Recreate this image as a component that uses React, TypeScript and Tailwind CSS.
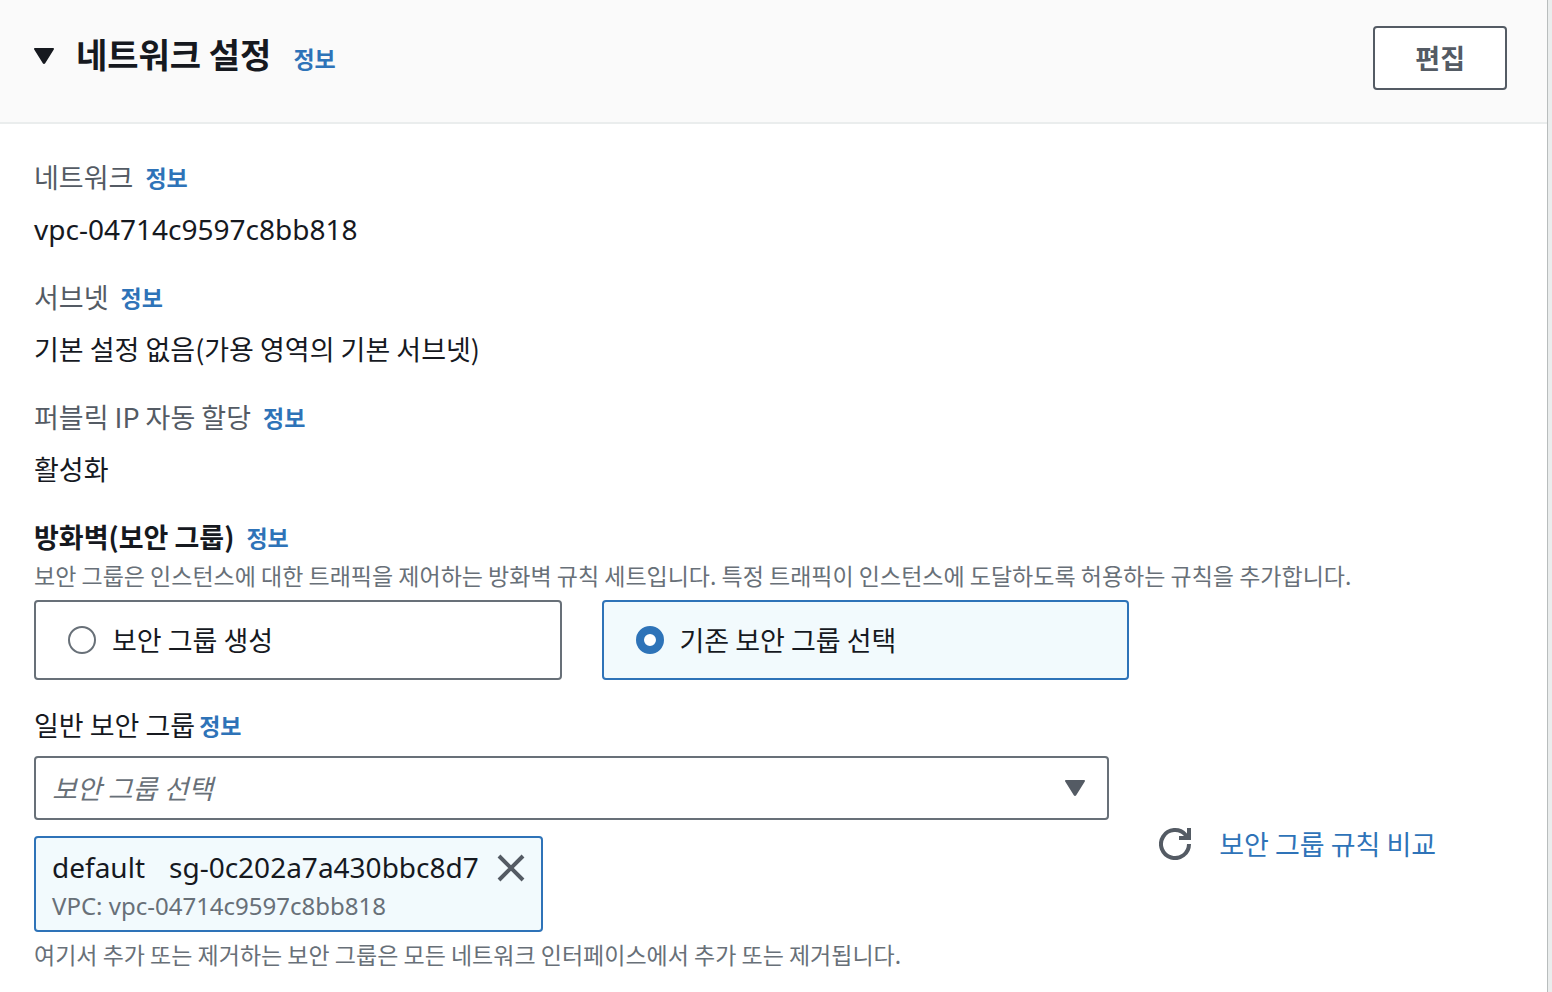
import React, { FC, ReactNode, useState } from 'react';

const Info: FC = () => (
  <a href="#info" className="text-[23px] font-bold text-[#2e73b8] hover:underline">
    정보
  </a>
);

const Caret: FC<{ className: string }> = ({ className }) => (
  <svg viewBox="0 0 20 16" className={`h-4 w-5 ${className}`} fill="currentColor" aria-hidden="true">
    <path d="M1 0h18c.8 0 1.2.8.8 1.600L11.200 15.200c-.5 1-1.900 1-2.400 0L.2 1.600C-.2.8.2 0 1 0z" />
  </svg>
);

type FieldProps = {
  label: string;
  children: ReactNode;
};

const Field: FC<FieldProps> = ({ label, children }) => (
  <div className="flex flex-col gap-3">
    <dt className="flex h-10 items-center gap-3 text-[27px] leading-9 text-[#545b64]">
      {label}
      <Info />
    </dt>
    <dd className="flex h-10 items-center text-[27px] leading-9">{children}</dd>
  </div>
);

const options = [
  { id: 'create', label: '보안 그룹 생성' },
  { id: 'existing', label: '기존 보안 그룹 선택' },
];

const App: FC = () => {
  const [mode, setMode] = useState('existing');
  const [open, setOpen] = useState(true);
  const [attached, setAttached] = useState(true);

  return (
    <div className="min-h-screen bg-[#eaeded] pr-1 font-['Noto_Sans_CJK_KR','Noto_Sans',sans-serif] text-[#16191f]">
      <section className="min-h-screen border-r border-[#b9bdbd] bg-white">
        <header className="flex items-start justify-between border-b-2 border-[#eaeded] bg-[#fafafa] pt-[26px] pr-10 pb-8 pl-[34px]">
          <div className="flex items-baseline gap-[22px]">
            <h2 className="text-[34px] leading-[56px] font-bold">
              <button type="button" aria-expanded={open} onClick={() => setOpen(!open)}>
                <Caret className={`mr-[22px] inline-block align-[4px] ${open ? '' : '-rotate-90'}`} />
                네트워크 설정
              </button>
            </h2>
            <Info />
          </div>
          <button
            type="button"
            className="h-16 rounded-sm border-2 border-[#545b64] bg-white px-10 text-[27px] leading-9 font-bold text-[#545b64]"
          >
            편집
          </button>
        </header>

        {open && (
          <div className="pt-[33px] pr-10 pb-1 pl-[34px]">
            <dl className="flex flex-col gap-7">
              <Field label="네트워크">
                <span className="font-['Noto_Sans',sans-serif] text-[28px]">vpc-04714c9597c8bb818</span>
              </Field>
              <Field label="서브넷">기본 설정 없음(가용 영역의 기본 서브넷)</Field>
              <Field label="퍼블릭 IP 자동 할당">활성화</Field>
            </dl>

            <fieldset className="mt-7">
              <legend className="flex h-10 items-center gap-3 text-[27px] leading-9 font-bold">
                방화벽(보안 그룹)
                <Info />
              </legend>
              <p className="text-[23px] leading-9 text-[#687078]">
                보안 그룹은 인스턴스에 대한 트래픽을 제어하는 방화벽 규칙 세트입니다. 특정 트래픽이 인스턴스에 도달하도록 허용하는 규칙을 추가합니다.
              </p>
              <div className="mt-[7px] grid max-w-[1095px] grid-cols-2 gap-10">
                {options.map(({ id, label }) => (
                  <label
                    key={id}
                    className={`flex h-20 items-center gap-4 rounded-sm border-2 px-8 text-[27px] leading-9 ${
                      mode === id ? 'border-[#2e73b8] bg-[#f2fafd]' : 'border-[#687078] bg-white'
                    }`}
                  >
                    <input
                      type="radio"
                      name="security-group-mode"
                      checked={mode === id}
                      onChange={() => setMode(id)}
                      className="size-7 shrink-0 appearance-none rounded-full border-2 border-[#687078] bg-white checked:border-8 checked:border-[#2e73b8]"
                    />
                    {label}
                  </label>
                ))}
              </div>
            </fieldset>

            <div className="mt-[25px] flex h-10 items-center gap-1 text-[27px] leading-9">
              <label htmlFor="common-groups">일반 보안 그룹</label>
              <Info />
            </div>

            <div className="mt-[11px] flex items-center">
              <div className="w-[73%]">
                <div className="relative">
                  <select
                    id="common-groups"
                    defaultValue=""
                    className="block h-16 w-full appearance-none rounded-sm border-2 border-[#687078] bg-white pr-16 pl-4 text-[27px] text-[#687078] italic"
                  >
                    <option value="">보안 그룹 선택</option>
                    <option value="default">default</option>
                  </select>
                  <Caret className="pointer-events-none absolute top-6 right-6 text-[#545b64]" />
                </div>
                {attached && (
                  <div className="mt-4 flex h-24 w-fit items-start gap-[18px] rounded-sm border-2 border-[#2e73b8] bg-[#f2fafd] px-4 pt-[11px] font-['Noto_Sans',sans-serif]">
                    <div>
                      <div className="flex gap-6 text-[28px] leading-9">
                        <span>default</span>
                        <span>sg-0c202a7a430bbc8d7</span>
                      </div>
                      <div className="text-[24px] leading-[42px] text-[#687078]">VPC: vpc-04714c9597c8bb818</div>
                    </div>
                    <button type="button" aria-label="제거" onClick={() => setAttached(false)} className="pt-[5px] text-[#545b64]">
                      <svg viewBox="0 0 28 28" className="size-7" fill="none" stroke="currentColor" strokeWidth="4">
                        <path d="M2 2l24 24M26 2L2 26" />
                      </svg>
                    </button>
                  </div>
                )}
              </div>
              <button type="button" aria-label="새로 고침" className="ml-[50px] shrink-0 text-[#545b64]">
                <svg viewBox="0 0 32 32" className="size-8" fill="none" stroke="currentColor" strokeWidth="4">
                  <path d="M30 16a14 14 0 1 1-3.500-9.200L29 9.500" />
                  <path d="M30 0v10H20" />
                </svg>
              </button>
              <a href="#compare" className="ml-7 shrink-0 text-[27px] leading-9 text-[#2e73b8] hover:underline">
                보안 그룹 규칙 비교
              </a>
            </div>

            <p className="mt-1 text-[23px] leading-9 text-[#687078]">
              여기서 추가 또는 제거하는 보안 그룹은 모든 네트워크 인터페이스에서 추가 또는 제거됩니다.
            </p>
          </div>
        )}
      </section>
    </div>
  );
};

export default App;
